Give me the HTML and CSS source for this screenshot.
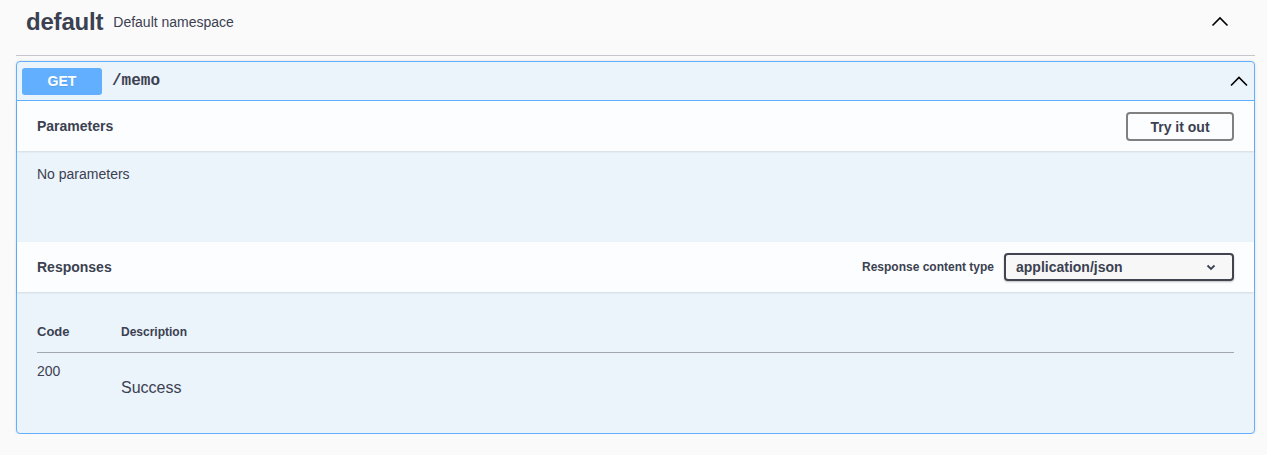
FILE: index.html
```html
<!DOCTYPE html>
<html>
<head>
<meta charset="utf-8">
<link rel="stylesheet" href="styles.css">
</head>
<body>
<div class="wrap">
  <h3 class="tag">
    <span class="tag-name">default</span>
    <small class="tag-desc">Default namespace</small>
    <svg class="tag-arrow" width="20" height="20" viewBox="0 0 20 20"><path d="M2.5 14.5 L10 7 L17.5 14.5" fill="none" stroke="#000" stroke-width="1.6"/></svg>
  </h3>
  <div class="opblock">
    <div class="summary">
      <span class="method">GET</span>
      <span class="path">/memo</span>
      <svg class="op-arrow" width="20" height="20" viewBox="0 0 20 20"><path d="M2 14.5 L10 6.5 L18 14.5" fill="none" stroke="#000" stroke-width="1.6"/></svg>
    </div>
    <div class="section-header">
      <h4 class="sec-title">Parameters</h4>
      <button class="try">Try it out</button>
    </div>
    <div class="params-body">No parameters</div>
    <div class="section-header">
      <h4 class="sec-title">Responses</h4>
      <div class="ctype">
        <span class="ctype-label">Response content type</span>
        <div class="select">application/json
          <svg class="sel-arrow" width="10" height="7" viewBox="0 0 10 7"><path d="M1.5 1.5 L5 5 L8.5 1.5" fill="none" stroke="#3b4151" stroke-width="1.8"/></svg>
        </div>
      </div>
    </div>
    <div class="resp-body">
      <div class="resp-head">
        <span class="col-code h-code">Code</span>
        <span class="h-desc">Description</span>
      </div>
      <div class="resp-row">
        <span class="col-code">200</span>
        <p class="desc">Success</p>
      </div>
    </div>
  </div>
</div>
</body>
</html>
```
FILE: styles.css
```css
* { box-sizing: border-box; }
body {
  margin: 0;
  background: #fafafa;
  font-family: "Liberation Sans", Arial, sans-serif;
  color: #3b4151;
}
.wrap {
  padding: 0 12px 0 16px;
}
.tag {
  margin: 0 0 5px;
  height: 56px;
  padding: 0 20px 12px 10px;
  display: flex;
  align-items: center;
  border-bottom: 1px solid #c4c6cb;
  font-weight: 700;
}
.tag-name {
  font-size: 24px;
  color: #3b4151;
  letter-spacing: -0.2px;
}
.tag-desc {
  font-size: 14px;
  font-weight: 400;
  padding-left: 10px;
  padding-top: 1px;
  color: #3b4151;
}
.tag-arrow {
  margin-left: auto;
  margin-right: 5px;
  margin-top: -2px;
}
.opblock {
  border: 1px solid #61affe;
  border-radius: 4px;
  background: #ebf3fb;
  box-shadow: 0 0 3px rgba(0,0,0,.12);
}
.summary {
  display: flex;
  align-items: center;
  padding: 5px;
  height: 39px;
  border-bottom: 1px solid #61affe;
}
.method {
  width: 80px;
  height: 27px;
  display: flex;
  align-items: center;
  justify-content: center;
  background: #61affe;
  color: #fff;
  font-weight: 700;
  font-size: 14px;
  border-radius: 3px;
  text-shadow: 0 1px 0 rgba(0,0,0,.1);
}
.path {
  padding: 0 10px;
  font-family: "Liberation Mono", "Courier New", monospace;
  font-weight: 700;
  font-size: 16px;
  color: #3b4151;
}
.op-arrow {
  margin-left: auto;
  margin-right: 0;
}
.section-header {
  display: flex;
  align-items: center;
  height: 50px;
  padding: 0 20px;
  background: rgba(255,255,255,.8);
  box-shadow: 0 1px 2px rgba(0,0,0,.1);
}
.sec-title {
  margin: 0;
  font-size: 14px;
  font-weight: 700;
  flex: 1;
}
.try {
  font-family: "Liberation Sans", Arial, sans-serif;
  font-size: 14px;
  font-weight: 700;
  color: #3b4151;
  background: transparent;
  border: 2px solid #808080;
  border-radius: 4px;
  width: 108px;
  height: 29px;
  padding: 0;
  margin-top: 1px;
}
.params-body {
  height: 91px;
  padding: 15px 20px;
  font-size: 14px;
}
.ctype {
  display: flex;
  align-items: center;
}
.ctype-label {
  font-size: 12px;
  font-weight: 700;
  margin-right: 10px;
}
.select {
  position: relative;
  width: 230px;
  height: 28px;
  border: 2px solid #41444e;
  border-radius: 4px;
  background: #f7f7f7;
  font-size: 14px;
  font-weight: 700;
  padding: 4px 10px;
  box-shadow: 0 1px 2px rgba(0,0,0,.25);
}
.sel-arrow {
  position: absolute;
  right: 16px;
  top: 9px;
}
.resp-body {
  padding: 24px 20px 10px;
  height: 141px;
}
.resp-head {
  display: flex;
  align-items: flex-start;
  padding-top: 8px;
  height: 37px;
  border-bottom: 1px solid #a3a7ae;
  font-weight: 700;
}
.col-code {
  width: 84px;
  flex: none;
}
.h-code { font-size: 13px; }
.h-desc { font-size: 12px; padding-top: 1px; }
.resp-row {
  display: flex;
  padding-top: 10px;
  font-size: 14px;
}
.desc {
  margin: 16px 0 0;
  font-size: 16px;
}
```
